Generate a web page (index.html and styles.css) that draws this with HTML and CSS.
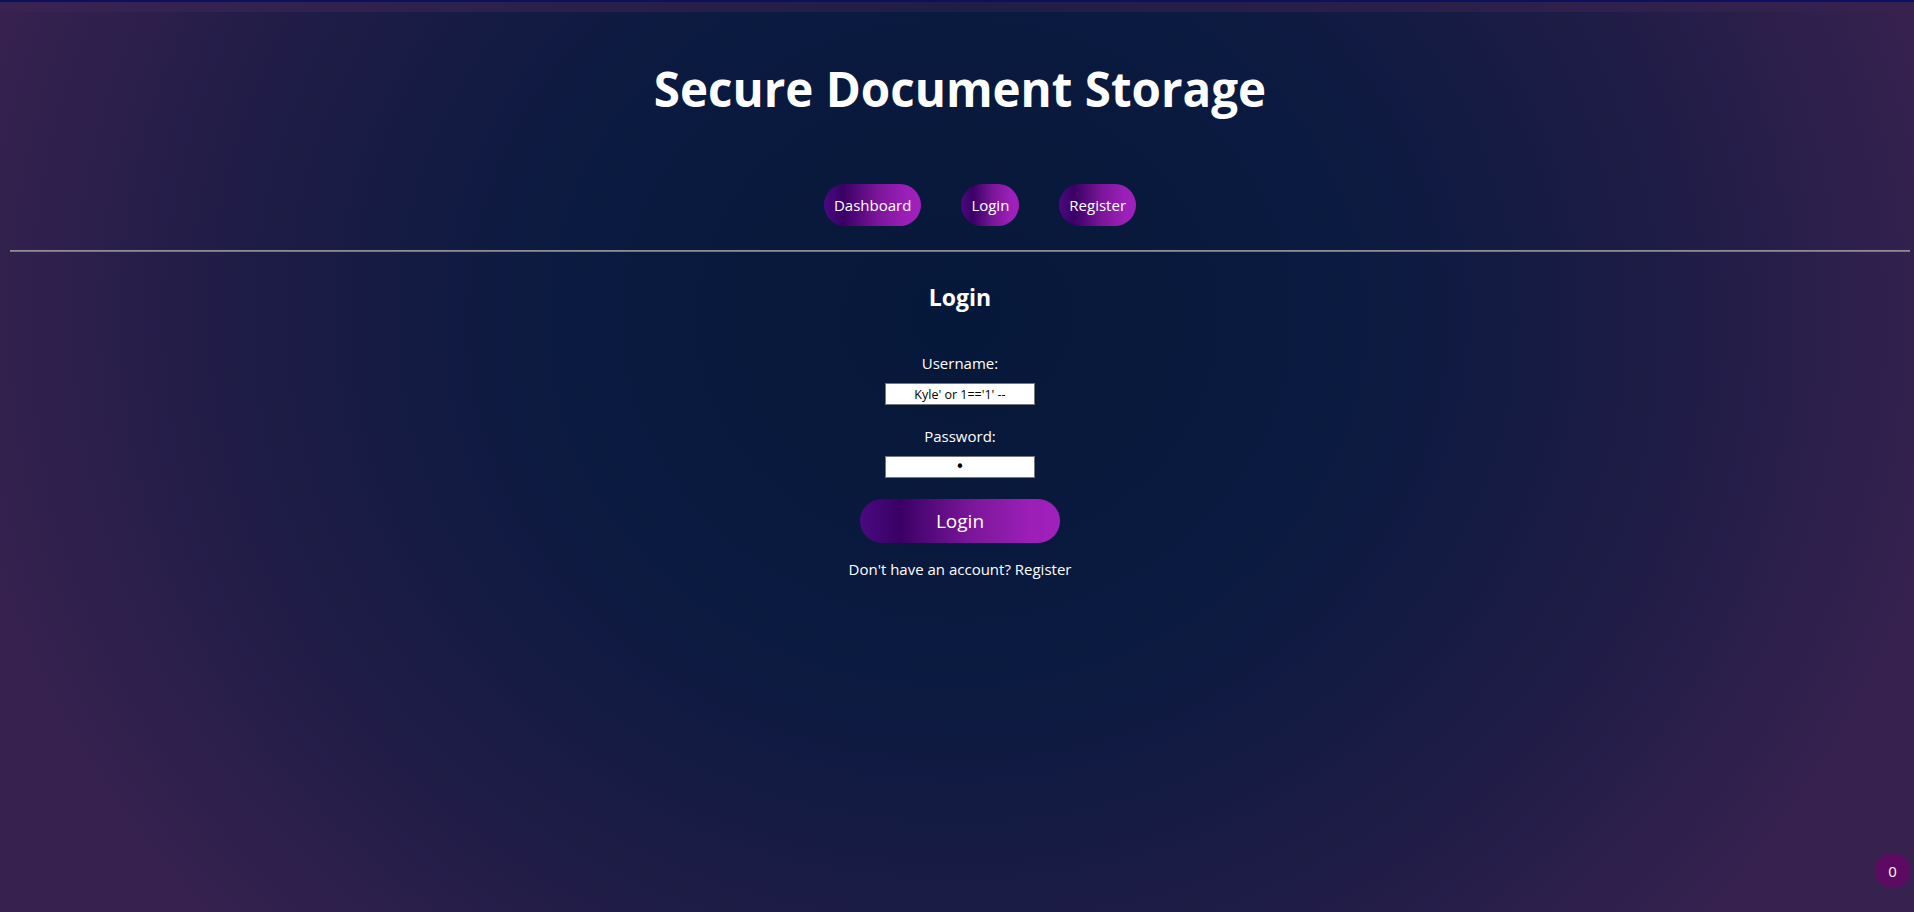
FILE: index.html
```html
<!DOCTYPE html>
<html lang="en">
<head>
<meta charset="utf-8">
<title>Secure Document Storage</title>
<link rel="stylesheet" href="styles.css">
</head>
<body>
<div class="top-strip"></div>
<div class="page">
  <header class="site-header">
    <h1 class="site-title">Secure Document Storage</h1>
    <nav class="nav">
      <a class="nav-link" href="#">Dashboard</a>
      <a class="nav-link" href="#">Login</a>
      <a class="nav-link" href="#">Register</a>
    </nav>
  </header>
  <hr class="divider">
  <main class="login">
    <h2 class="login-title">Login</h2>
    <form class="login-form">
      <div class="field">
        <label class="field-label" for="username">Username:</label>
        <input class="field-input" id="username" type="text" value="Kyle' or 1=='1' --">
      </div>
      <div class="field">
        <label class="field-label" for="password">Password:</label>
        <input class="field-input field-input--password" id="password" type="password" value="a">
      </div>
      <button class="login-button" type="button">Login</button>
    </form>
    <p class="register-hint">Don't have an account? <a class="register-link" href="#">Register</a></p>
  </main>
</div>
<div class="badge">0</div>
</body>
</html>
```

FILE: styles.css
```css
html {
  min-height: 100%;
  background-color: #1d1c46;
  background-image: radial-gradient(ellipse 1000px 900px at 50% 35%, #061839 0%, #0b1a40 40%, #1d1c46 70%, #36214f 100%);
  background-repeat: no-repeat;
  background-attachment: fixed;
}

body {
  margin: 0;
  min-height: 912px;
  font-family: "Open Sans", "Noto Sans", sans-serif;
  color: #ffffff;
}

.top-strip {
  height: 10px;
  border-top: 2px solid #0c1060;
  background: linear-gradient(to right, #3a2352, #1f1d46 50%, #37214f);
}

.page {
  padding: 0 4px 0 10px;
}

.site-header {
  display: flex;
  flex-direction: column;
  align-items: center;
}

.site-title {
  margin: 48px 0 0;
  font-size: 47.5px;
  line-height: 58px;
  font-weight: 700;
  text-align: center;
}

.nav {
  display: flex;
  justify-content: center;
  gap: 40px;
  padding-left: 40px;
  margin-top: 66px;
  align-self: stretch;
}

.nav-link {
  display: block;
  padding: 10px 10px;
  border-radius: 21px;
  font-size: 15px;
  line-height: 22px;
  color: #ffffff;
  text-decoration: none;
  background: linear-gradient(90deg, #4a0a80 0%, #3a0065 20%, #7a1699 55%, #9c1fb8 85%, #a020bc 100%);
}

.divider {
  margin: 24px 0 0;
  border: 0;
  border-top: 1px solid #8e8e8e;
  border-bottom: 1px solid #767676;
  height: 0;
}

.login {
  display: flex;
  flex-direction: column;
  align-items: center;
}

.login-title {
  margin: 29px 0 0;
  font-size: 23px;
  line-height: 32px;
  font-weight: 700;
}

.login-form {
  display: flex;
  flex-direction: column;
  align-items: center;
  margin-top: 39px;
}

.field {
  display: flex;
  flex-direction: column;
  align-items: center;
  gap: 9px;
  margin-bottom: 20px;
}

.field:last-of-type {
  margin-bottom: 21px;
}

.field-label {
  font-size: 15px;
  line-height: 22px;
}

.field-input {
  box-sizing: border-box;
  width: 150px;
  height: 22px;
  padding: 1px 2px;
  border: 1px solid #767676;
  background: #ffffff;
  color: #000000;
  font-family: "Open Sans", sans-serif;
  font-size: 12.5px;
  text-align: center;
}

.field-input--password {
  font-family: "DejaVu Sans", sans-serif;
  font-size: 15px;
}

.login-button {
  width: 200px;
  height: 44px;
  border: 0;
  border-radius: 22px;
  color: #ffffff;
  font-family: "Open Sans", "Noto Sans", sans-serif;
  font-size: 19px;
  background: linear-gradient(90deg, #4a0a80 0%, #3a0065 20%, #7a1699 55%, #9c1fb8 85%, #a020bc 100%);
}

.register-hint {
  margin: 15px 0 0;
  font-size: 15px;
  line-height: 22px;
}

.register-link {
  color: #ffffff;
  text-decoration: none;
}

.badge {
  position: fixed;
  right: 4px;
  bottom: 24px;
  width: 35px;
  height: 35px;
  border-radius: 50%;
  background: #5c0a62;
  display: flex;
  align-items: center;
  justify-content: center;
  font-size: 15px;
}
```
